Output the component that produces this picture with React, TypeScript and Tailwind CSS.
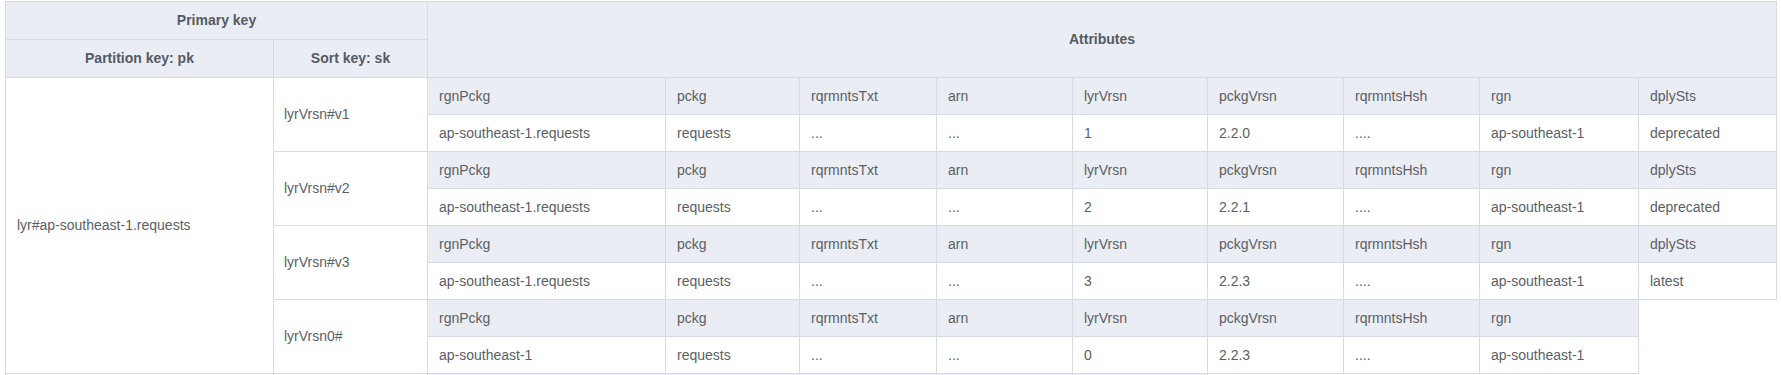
const attrCols = [
  'rgnPckg',
  'pckg',
  'rqrmntsTxt',
  'arn',
  'lyrVrsn',
  'pckgVrsn',
  'rqrmntsHsh',
  'rgn',
  'dplySts',
]

const colWidths = [238, 134, 137, 136, 135, 136, 136, 159, 138]

const groups = [
  {
    sk: 'lyrVrsn#v1',
    values: ['ap-southeast-1.requests', 'requests', '...', '...', '1', '2.2.0', '....', 'ap-southeast-1', 'deprecated'],
  },
  {
    sk: 'lyrVrsn#v2',
    values: ['ap-southeast-1.requests', 'requests', '...', '...', '2', '2.2.1', '....', 'ap-southeast-1', 'deprecated'],
  },
  {
    sk: 'lyrVrsn#v3',
    values: ['ap-southeast-1.requests', 'requests', '...', '...', '3', '2.2.3', '....', 'ap-southeast-1', 'latest'],
  },
  {
    sk: 'lyrVrsn0#',
    values: ['ap-southeast-1', 'requests', '...', '...', '0', '2.2.3', '....', 'ap-southeast-1'],
  },
]

export default function App() {
  return (
    <div className="w-[1781px] h-[375px] overflow-hidden bg-white pt-px pl-[5px] font-['Liberation_Sans',Arial,sans-serif] text-[14px] text-[#5a5f66]">
      <table className="border-collapse table-fixed w-[1771px]">
        <colgroup>
          <col className="w-[268px]" />
          <col className="w-[154px]" />
          {colWidths.map((w, i) => (
            <col key={i} style={{ width: w }} />
          ))}
        </colgroup>
        <thead>
          <tr className="h-[38px]">
            <th
              colSpan={2}
              className="border border-[#d7dce4] bg-[#eaedf3] font-bold text-[#545b64] text-center"
            >
              Primary key
            </th>
            <th
              colSpan={9}
              rowSpan={2}
              className="border border-[#d7dce4] bg-[#eaedf3] font-bold text-[#545b64] text-center"
            >
              Attributes
            </th>
          </tr>
          <tr className="h-[38px]">
            <th className="border border-[#d7dce4] bg-[#eaedf3] font-bold text-[#545b64] text-center">
              Partition key: pk
            </th>
            <th className="border border-[#d7dce4] bg-[#eaedf3] font-bold text-[#545b64] text-center">
              Sort key: sk
            </th>
          </tr>
        </thead>
        <tbody>
          {groups.map((g, gi) => (
            <>
              <tr key={`h${gi}`} className="h-[37px]">
                {gi === 0 && (
                  <td
                    rowSpan={8}
                    className="border border-[#d7dce4] bg-white px-[11px] align-middle"
                  >
                    lyr#ap-southeast-1.requests
                  </td>
                )}
                <td
                  rowSpan={2}
                  className="border border-[#d7dce4] bg-white px-[10px] align-middle"
                >
                  {g.sk}
                </td>
                {g.values.map((_, ci) => (
                  <td
                    key={ci}
                    className="border border-[#d7dce4] bg-[#eaedf3] px-[11px] align-middle whitespace-nowrap"
                  >
                    {attrCols[ci]}
                  </td>
                ))}
              </tr>
              <tr key={`d${gi}`} className="h-[37px]">
                {g.values.map((v, ci) => (
                  <td
                    key={ci}
                    className="border border-[#d7dce4] bg-white px-[11px] align-middle whitespace-nowrap"
                  >
                    {v}
                  </td>
                ))}
              </tr>
            </>
          ))}
          <tr className="h-[37px]">
            <td className="border border-[#d7dce4] bg-white" />
            <td className="border border-[#d7dce4] bg-white" />
            <td colSpan={4} className="border border-[#d7dce4] bg-[#eaedf3]" />
            <td className="border border-[#d7dce4] bg-[#eaedf3]" />
          </tr>
        </tbody>
      </table>
    </div>
  )
}
